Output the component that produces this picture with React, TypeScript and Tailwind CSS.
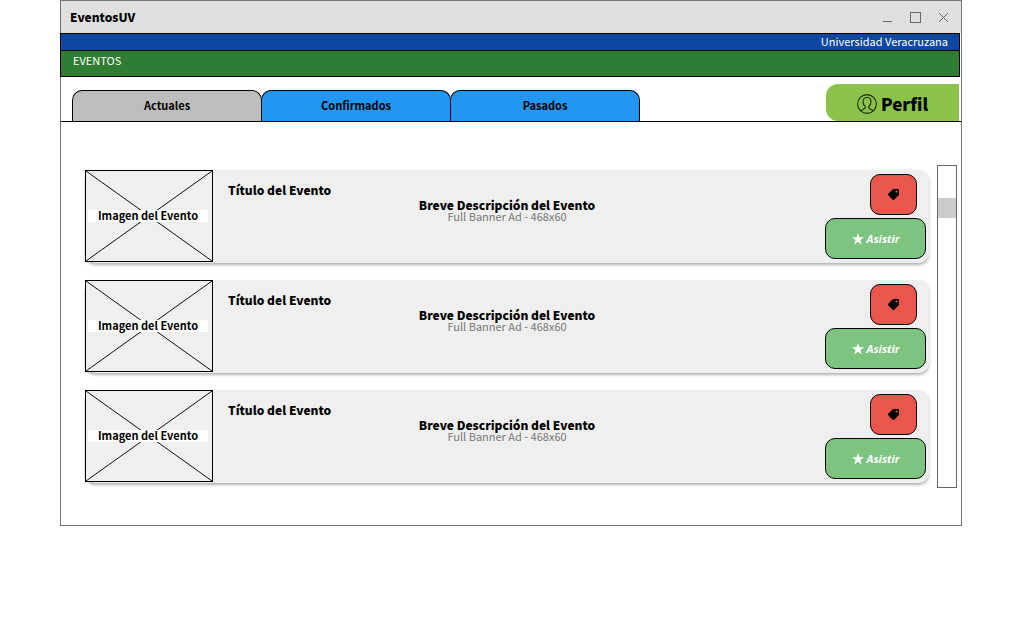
import { FaTag } from 'react-icons/fa';

const tabs = ['Actuales', 'Confirmados', 'Pasados'];
const events = [1, 2, 3];

function WindowControls() {
  return (
    <div className="flex items-center gap-4 text-[#666]">
      <button aria-label="Minimizar" className="size-3">
        <svg viewBox="0 0 12 12" className="size-3" stroke="currentColor" shapeRendering="crispEdges">
          <path d="M2 10.500h9" />
        </svg>
      </button>
      <button aria-label="Maximizar" className="size-3">
        <svg viewBox="0 0 12 12" className="size-3" fill="none" stroke="currentColor" shapeRendering="crispEdges">
          <path d="M1.500 1.500h10v10h-10z" />
        </svg>
      </button>
      <button aria-label="Cerrar" className="size-3">
        <svg viewBox="0 0 12 12" className="size-3" fill="none" stroke="currentColor">
          <path d="M2.200 2.200l8.600 8.600M10.800 2.200l-8.600 8.600" />
        </svg>
      </button>
    </div>
  );
}

function ProfileIcon() {
  return (
    <svg viewBox="0 0 20 20" className="size-5" fill="none" stroke="#1c2710" strokeWidth="1.1">
      <circle cx="10" cy="10" r="9.400" />
      <path d="M4 17c.5-1.500 3-2 4.200-2.900v-1.600C6.800 11.500 6 9.500 6 7.500C6 5 7.700 3.500 10 3.500S14 5 14 7.500c0 2-.8 4-2.200 5v1.600c1.200.9 3.700 1.400 4.200 2.900" />
    </svg>
  );
}

function StarIcon() {
  return (
    <svg viewBox="0 0 12 12" className="size-3" fill="currentColor">
      <path d="M6 0l1.450 4.300H12L8.350 7.050 9.700 11.500 6 8.850 2.300 11.500 3.650 7.050 0 4.300h4.550z" />
    </svg>
  );
}

function EventCard() {
  return (
    <article className="flex h-[93px] rounded-[10px] bg-[#efefef] shadow-[0_2px_3px_rgba(0,0,0,0.3)]">
      <div className="relative flex h-[92px] w-32 shrink-0 items-center border border-black bg-[#efefef] pr-1 pl-[2px]">
        <svg viewBox="0 0 126 90" preserveAspectRatio="none" className="absolute inset-0 size-full" stroke="#111">
          <path d="M0 0L126 90M126 0L0 90" />
        </svg>
        <span className="relative w-full bg-white pb-px text-center text-[11px] leading-[11px] font-bold">Imagen del Evento</span>
      </div>
      <h2 className="w-[201px] shrink-0 pt-[10px] pl-[15px] text-xs leading-5 font-black">Título del Evento</h2>
      <div className="w-[186px] shrink-0 pt-[29px] text-center">
        <p className="text-xs leading-3 font-black whitespace-nowrap">Breve Descripción del Evento</p>
        <p className="text-[11px] leading-[11px] text-[#777]">Full Banner Ad - 468x60</p>
      </div>
      <div className="ml-auto flex flex-col items-end gap-[3px] pt-1 pr-[3px]">
        <button aria-label="Etiqueta" className="mr-[9px] flex h-[41px] w-[47px] items-center justify-center rounded-[10px] border border-black bg-[#ea564b]">
          <FaTag className="size-[11px] -scale-x-100" />
        </button>
        <button className="flex h-[41px] w-[101px] items-center justify-center gap-[3px] rounded-[10px] border border-black bg-[#7dc480] pt-px font-['Open_Sans',sans-serif] text-[11px] font-bold text-white italic">
          <StarIcon />
          Asistir
        </button>
      </div>
    </article>
  );
}

export default function App() {
  return (
    <div className="min-h-screen bg-white pr-[49px] pl-[60px] font-['Noto_Sans_CJK_JP',sans-serif] text-black">
      <main className="border border-[#777] pb-[37px]">
        <header className="flex h-8 items-center justify-between bg-[#e0e0e0] pr-3 pl-[9px]">
          <h1 className="text-xs font-black">EventosUV</h1>
          <WindowControls />
        </header>
        <div className="mr-px -ml-px h-[18px] border border-black bg-[#0d47a1] pr-[11px] text-right text-[11px] leading-[14px] text-white">
          Universidad Veracruzana
        </div>
        <div className="-mt-px mr-px -ml-px h-[27px] border border-black bg-[#2e7d32] pt-px pl-3 text-[11px] leading-4 text-white">
          EVENTOS
        </div>
        <div className="flex items-end justify-between border-b border-black pt-[7px] pr-[2px] pl-[11px]">
          <nav className="flex">
            {tabs.map((tab, i) => (
              <button
                key={tab}
                className={`-mr-px h-[31px] w-[190px] rounded-t-[10px] border border-b-0 border-black pb-[2px] text-[11px] font-bold ${i === 0 ? 'bg-[#bdbdbd]' : 'bg-[#2196f3]'}`}
              >
                {tab}
              </button>
            ))}
          </nav>
          <button className="flex h-[37px] w-[133px] items-center justify-center gap-1 rounded-l-[12px] bg-[#8bc34a] pt-[2px] text-[17px] font-black">
            <ProfileIcon />
            Perfil
          </button>
        </div>
        <div className="flex gap-2 pt-[43px] pr-1 pl-6">
          <section className="flex flex-1 flex-col gap-[17px] pt-[5px]">
            {events.map((id) => (
              <EventCard key={id} />
            ))}
          </section>
          <div className="h-[323px] w-5 border border-[#666] bg-white pt-8">
            <div className="h-5 bg-[#cbcbcb]" />
          </div>
        </div>
      </main>
    </div>
  );
}
